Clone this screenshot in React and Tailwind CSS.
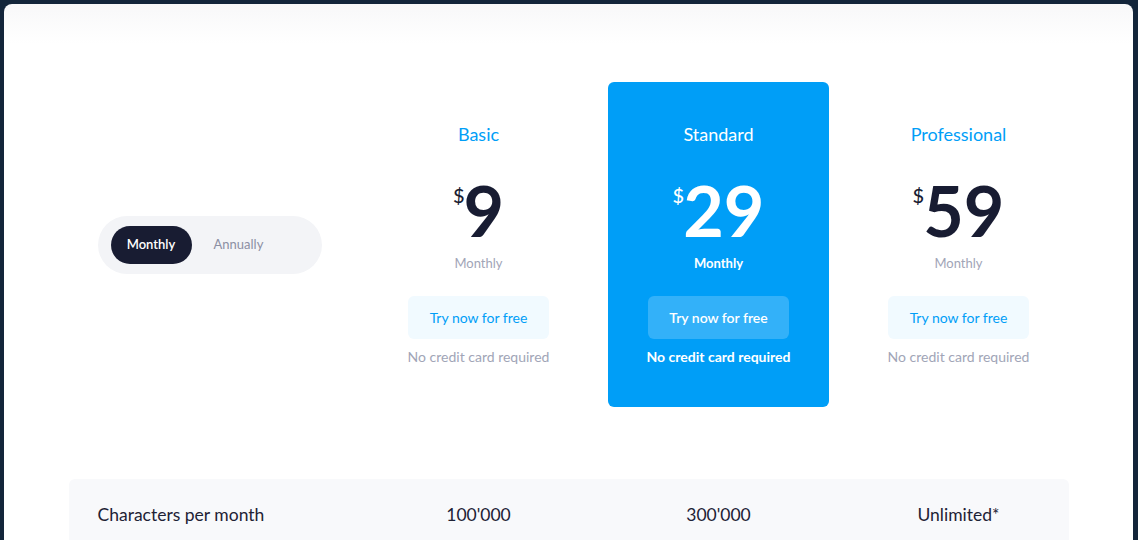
import React from 'react';

const plans = [
  { name: 'Basic', price: '9', featured: false },
  { name: 'Standard', price: '29', featured: true },
  { name: 'Professional', price: '59', featured: false },
];

const PlanColumn = ({ plan }) => {
  const f = plan.featured;
  return (
    <div className="w-[240px] shrink-0 flex justify-center">
      <div
        className={`${
          f ? 'bg-[#009ef7] rounded-md' : ''
        } w-[221px] flex flex-col items-center pt-[38px] pb-[40px]`}
      >
        <h3 className={`${f ? 'text-white' : 'text-[#009ef7]'} text-[18px] leading-[28px]`}>
          {plan.name}
        </h3>
        <div className={`${f ? 'text-white' : 'text-[#181c32]'} mt-[27px] flex items-start`}>
          <span className="text-[20px] leading-none mt-[10px] -mr-[1px] font-medium">$</span>
          <span className="text-[70px] leading-none font-bold">{plan.price}</span>
        </div>
        <p className={`${f ? 'text-white font-bold' : 'text-[#a1a5b7]'} mt-[8px] text-[13px] leading-[20px]`}>
          Monthly
        </p>
        <button
          className={`${
            f ? 'bg-[#33b1f9] text-white font-semibold' : 'bg-[#f1faff] text-[#009ef7]'
          } mt-[23px] h-[43px] w-[141px] rounded-md text-[14px]`}
        >
          Try now for free
        </button>
        <p className={`${f ? 'text-white font-bold' : 'text-[#a1a5b7]'} mt-[8px] text-[14px] leading-[20px]`}>
          No credit card required
        </p>
      </div>
    </div>
  );
};

const App = () => {
  return (
    <div
      className="h-[540px] bg-[#13253a] pt-[4px] px-[4px] pr-[5px] overflow-hidden"
      style={{ fontFamily: 'Lato, "Open Sans", sans-serif' }}
    >
      <div className="h-full rounded-t-lg bg-gradient-to-b from-[#f8f8f9] to-white to-[40px] bg-white">
        <div className="w-[1000px] mx-auto pt-[78px]">
          {/* plans */}
          <div className="flex items-center">
            <div className="w-[290px] shrink-0 pl-[29px]">
              <div className="w-[224px] h-[58px] rounded-full bg-[#f3f4f7] flex items-center pl-[13px]">
                <button className="h-[38px] w-[81px] rounded-full bg-[#181c32] text-white text-[13px] font-semibold">
                  Monthly
                </button>
                <button className="ml-[22px] text-[13px] text-[#8c8fa3]">Annually</button>
              </div>
            </div>
            {plans.map((p) => (
              <PlanColumn key={p.name} plan={p} />
            ))}
          </div>

          {/* features */}
          <div className="mt-[72px] bg-[#f8f9fb] rounded-t-md">
            <div className="flex items-center py-[24px] text-[17.5px] leading-[24px] text-[#1e2235]">
              <div className="w-[290px] shrink-0 pl-[29px]">Characters per month</div>
              <div className="w-[240px] shrink-0 text-center">100'000</div>
              <div className="w-[240px] shrink-0 text-center">300'000</div>
              <div className="w-[240px] shrink-0 text-center">Unlimited*</div>
            </div>
          </div>
        </div>
      </div>
    </div>
  );
};

export default App;
